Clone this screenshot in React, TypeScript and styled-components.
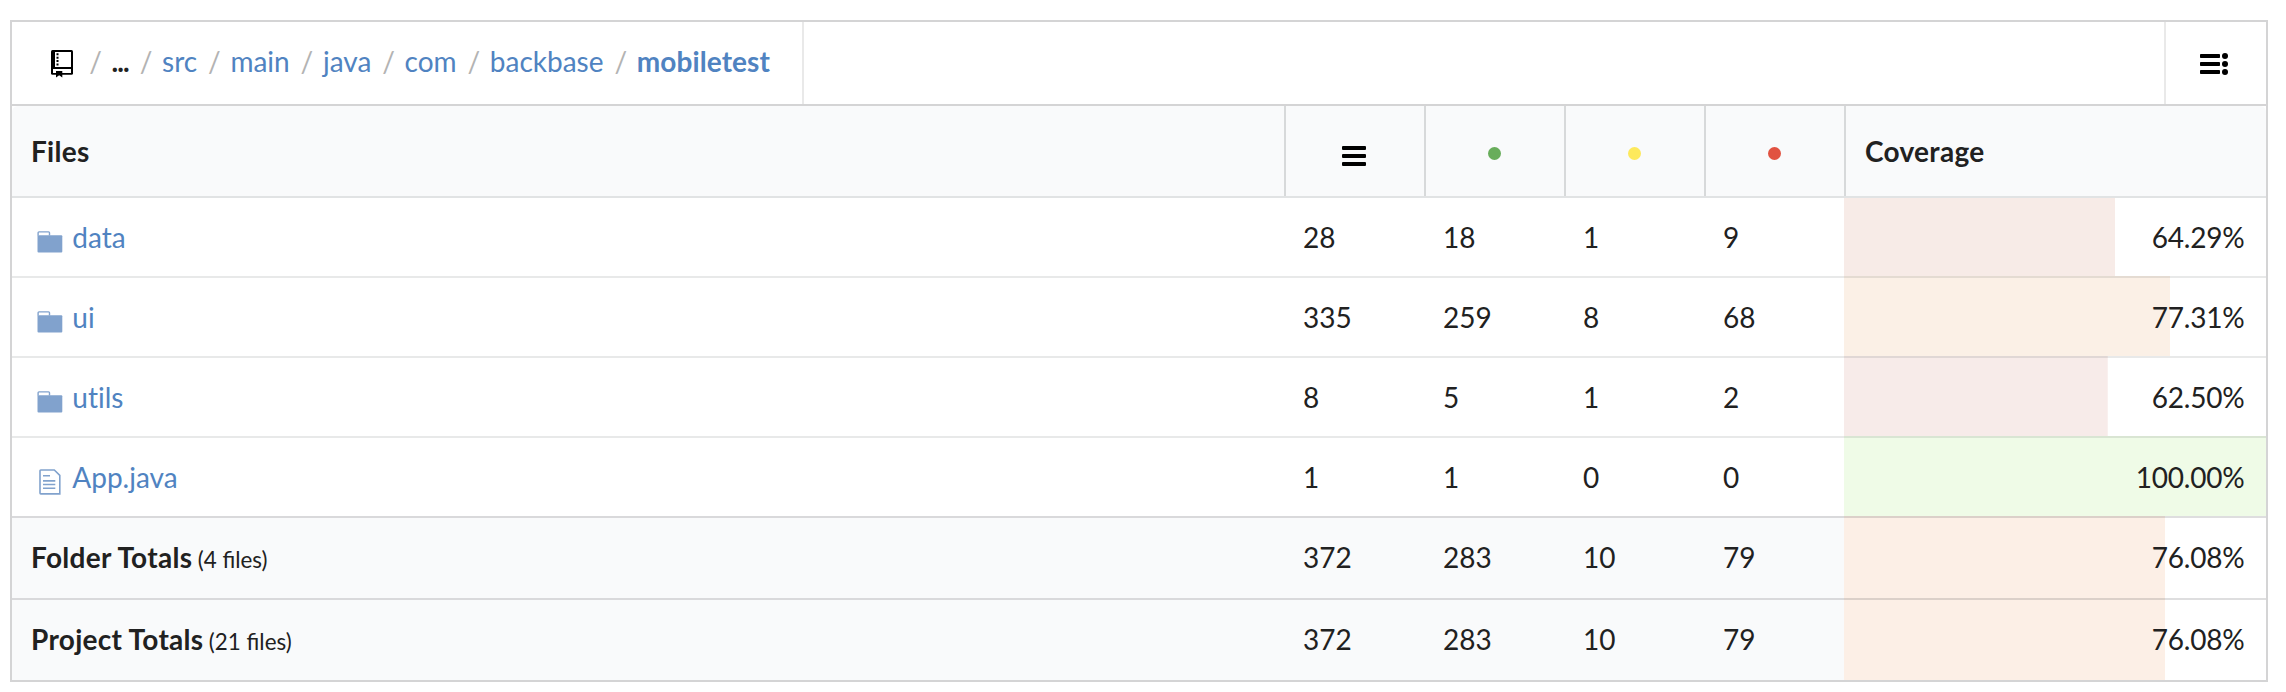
import React from "react";
import styled, { createGlobalStyle } from "styled-components";

const Global = createGlobalStyle`
  body { margin: 0; background: #fff; font-family: Lato, sans-serif; font-size: 28px; line-height: 36px; color: #212121; }
  * { box-sizing: border-box; }
`;

const Page = styled.main`
  padding: 20px 18px 10px 10px;
`;
const Frame = styled.section`
  border: 2px solid #d4d4d5;
`;
const Toolbar = styled.nav`
  display: flex;
  height: 84px;
  border-bottom: 2px solid #d4d4d5;
`;
const Crumbs = styled.div`
  display: flex;
  align-items: center;
  width: 792px;
  padding: 0 0 4px 39px;
  border-right: 2px solid #e9e9e9;
  white-space: nowrap;

  svg {
    margin: 6px 5.3px 0 0;
  }
`;
const Slash = styled.span`
  margin: 0 9.7px 0 10.9px;
  color: #b3b3b3;
`;
const Link = styled.a<{ $bold?: boolean }>`
  color: #5083c1;
  font-weight: ${(p) => (p.$bold ? 700 : 400)};
  letter-spacing: ${(p) => (p.$bold ? "0.1px" : "normal")};
  font-variant-ligatures: none;
`;
const Ellipsis = styled.b`
  letter-spacing: -0.9px;
`;
const ToggleButton = styled.div`
  display: flex;
  align-items: center;
  width: 102px;
  margin-left: auto;
  padding: 2px 0 0 34px;
  border-left: 2px solid #e9e9e9;
`;
const columns = "1272px repeat(4, 140px) 422px";
const HeaderRow = styled.div`
  display: grid;
  grid-template-columns: ${columns};
  height: 92px;
  background: #f9fafb;
  border-bottom: 2px solid #e1e3e4;
  border-radius: 6px 6px 0 0;
`;
const HeadCell = styled.div<{ $first?: boolean; $center?: boolean }>`
  display: flex;
  align-items: center;
  justify-content: ${(p) => (p.$center ? "center" : "flex-start")};
  padding: ${(p) => (p.$center ? "10px 2px 0 0" : "0 19px")};
  border-left: ${(p) => (p.$first ? "0" : "2px solid #d7d9da")};
  font-weight: 700;
  letter-spacing: 0.3px;
`;
const Dot = styled.i<{ $color: string }>`
  width: 13px;
  height: 13px;
  margin-bottom: 5px;
  border-radius: 50%;
  background: ${(p) => p.$color};
`;
const Row = styled.div<{ $total?: boolean; $first?: boolean; $height: number }>`
  display: grid;
  grid-template-columns: ${columns};
  height: ${(p) => p.$height}px;
  background: ${(p) => (p.$total ? "#f9fafb" : "#fff")};
  --line: ${(p) => (p.$first ? "0 solid" : p.$total ? "2px solid rgba(34,36,38,.15)" : "2px solid rgba(34,36,38,.1)")};
  --lift: ${(p) => (p.$total ? "2px" : "0px")};
`;
const Cell = styled.div`
  display: flex;
  align-items: center;
  padding: 0 19px var(--lift);
  border-top: var(--line);
`;
const IconBox = styled.span`
  display: flex;
  justify-content: center;
  width: 26px;
  margin: 10px 9.3px 0 6px;
`;
const Strong = styled.strong`
  letter-spacing: 0.3px;
`;
const Small = styled.small`
  margin-left: -1.8px;
  font-size: 22.4px;
  line-height: 1;
`;
const CoverageCell = styled(Cell)<{ $color: string; $value: number }>`
  justify-content: flex-end;
  padding-right: 21.5px;
  letter-spacing: -0.2px;
  background: linear-gradient(${(p) => p.$color}, ${(p) => p.$color}) 0 0 / ${(p) => p.$value}% 100% no-repeat border-box #fff;
`;

const RepoIcon = () => (
  <svg width="22" height="28" viewBox="0 0 22 28">
    <rect width="22" height="24.700" rx="1.500" />
    <path d="M4 2H20V17H4ZM2 19H20V23H2Z" fill="#fff" />
    <path d="M5 21H11.300V27.500L8.150 25.300L5 27.500Z" />
    <path d="M5.500 3.300h2v2h-2zM5.500 6.700h2v2h-2zM5.500 10.100h2v2h-2zM5.500 13.500h2v2h-2z" />
  </svg>
);
const FolderIcon = () => (
  <svg width="26" height="22" viewBox="0 0 26 22">
    <path d="M1.100 4.500V1.800Q1.100.900 2 .900H11.600Q12.500.900 12.500 1.800V4.500" fill="none" stroke="#81a2cd" strokeWidth="1.400" />
    <path d="M.5 4.200H24.300Q25.300 4.200 25.300 5.200V20.500Q25.300 21.500 24.300 21.500H1.500Q.5 21.500.5 20.500Z" fill="#81a2cd" />
  </svg>
);
const FileIcon = () => (
  <svg width="22" height="26" viewBox="0 0 22 26" fill="none" stroke="#81a2cd" strokeWidth="1.600">
    <path d="M1.800 1H15.300L20.800 6.300V24.900H1.800Q1 24.900 1 24.100V1.800Q1 1 1.800 1Z" />
    <path d="M4 6.700h7M4 11.900h12.300M4 15.500h12.300M4 19.200h12.300" />
  </svg>
);
const LinesIcon = () => (
  <svg width="24" height="20" viewBox="0 0 24 20">
    {[0, 8, 16].map((y) => <rect key={y} y={y} width="24" height="4" rx="1" />)}
  </svg>
);
const ListIcon = () => (
  <svg width="28" height="22" viewBox="0 0 28 22">
    {[1, 9, 17].map((y) => (
      <React.Fragment key={y}>
        <rect y={y} width="20" height="4" rx=".8" />
        <circle cx="25" cy={y + 2} r="3" />
      </React.Fragment>
    ))}
  </svg>
);

type Entry = { name: string; kind: "folder" | "file" | "total"; note?: string; counts: number[]; pct: string; color: string };
const entries: Entry[] = [
  { name: "data", kind: "folder", counts: [28, 18, 1, 9], pct: "64.29", color: "#f7ebe7" },
  { name: "ui", kind: "folder", counts: [335, 259, 8, 68], pct: "77.31", color: "#fbf0e6" },
  { name: "utils", kind: "folder", counts: [8, 5, 1, 2], pct: "62.50", color: "#f7ebe9" },
  { name: "App.java", kind: "file", counts: [1, 1, 0, 0], pct: "100.00", color: "#effbe7" },
  { name: "Folder Totals", kind: "total", note: "(4 files)", counts: [372, 283, 10, 79], pct: "76.08", color: "#fcefe6" },
  { name: "Project Totals", kind: "total", note: "(21 files)", counts: [372, 283, 10, 79], pct: "76.08", color: "#fcefe6" },
];
const heights = [78, 80, 80, 80, 82, 82];

export default function App() {
  return (
    <Page>
      <Global />
      <Frame>
        <Toolbar>
          <Crumbs>
            <RepoIcon />
            <Slash>/</Slash>
            <Ellipsis>...</Ellipsis>
            {["src", "main", "java", "com", "backbase", "mobiletest"].map((part) => (
              <React.Fragment key={part}>
                <Slash>/</Slash>
                <Link $bold={part === "mobiletest"}>{part}</Link>
              </React.Fragment>
            ))}
          </Crumbs>
          <ToggleButton><ListIcon /></ToggleButton>
        </Toolbar>
        <HeaderRow>
          <HeadCell $first>Files</HeadCell>
          <HeadCell $center><LinesIcon /></HeadCell>
          {["#68ad5b", "#fde95c", "#e15241"].map((c) => (
            <HeadCell key={c} $center><Dot $color={c} /></HeadCell>
          ))}
          <HeadCell>Coverage</HeadCell>
        </HeaderRow>
        {entries.map((e, i) => (
          <Row key={e.name} $total={e.kind === "total"} $first={i === 0} $height={heights[i]}>
            <Cell>
              {e.kind === "total" ? (
                <div>
                  <Strong>{e.name}</Strong> <Small>{e.note}</Small>
                </div>
              ) : (
                <>
                  <IconBox>{e.kind === "folder" ? <FolderIcon /> : <FileIcon />}</IconBox>
                  <Link>{e.name}</Link>
                </>
              )}
            </Cell>
            {e.counts.map((n, k) => <Cell key={k}>{n}</Cell>)}
            <CoverageCell $color={e.color} $value={Number(e.pct)}>{e.pct}%</CoverageCell>
          </Row>
        ))}
      </Frame>
    </Page>
  );
}
